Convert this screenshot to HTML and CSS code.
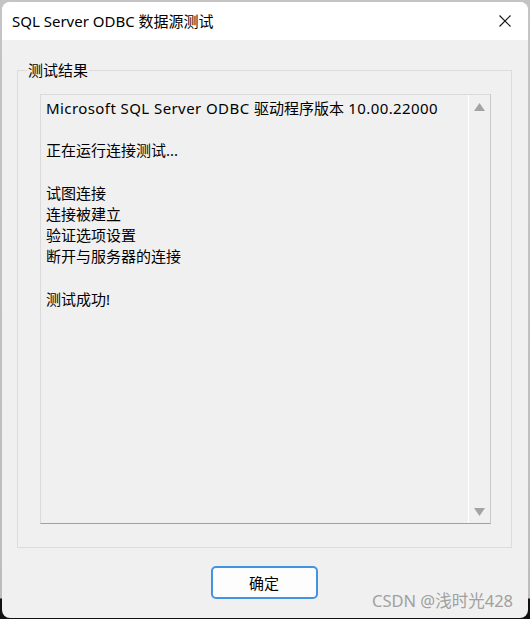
FILE: index.html
```html
<!DOCTYPE html>
<html lang="zh-CN">
<head>
<meta charset="utf-8">
<title>SQL Server ODBC 数据源测试</title>
<link rel="stylesheet" href="styles.css">
</head>
<body>
<div class="window">
  <div class="titlebar">
    <span class="title">SQL Server ODBC 数据源测试</span>
    <svg class="close" width="12" height="12" viewBox="0 0 12 12"><path d="M0.5 0.5 L11.5 11.5 M11.5 0.5 L0.5 11.5" stroke="#1a1a1a" stroke-width="1.2" fill="none"/></svg>
  </div>
  <div class="client">
    <fieldset class="group">
      <legend class="group-label">测试结果</legend>
      <div class="textbox">
        <div class="lines">
          <div class="line"><span class="lat">Microsoft SQL Server ODBC </span>驱动程序版本<span class="lat"> 10.00.22000</span></div>
          <div class="line"></div>
          <div class="line">正在运行连接测试...</div>
          <div class="line"></div>
          <div class="line">试图连接</div>
          <div class="line">连接被建立</div>
          <div class="line">验证选项设置</div>
          <div class="line">断开与服务器的连接</div>
          <div class="line"></div>
          <div class="line">测试成功!</div>
        </div>
        <div class="scrollbar">
          <svg width="11" height="8" viewBox="0 0 11 8"><path d="M5.5 0 L11 8 L0 8 Z" fill="#a3a3a3"/></svg>
          <svg width="11" height="8" viewBox="0 0 11 8"><path d="M0 0 L11 0 L5.5 8 Z" fill="#a3a3a3"/></svg>
        </div>
      </div>
    </fieldset>
    <div class="buttons">
      <button class="btn">确定</button>
    </div>
  </div>
</div>
<div class="watermark">CSDN @浅时光428</div>
</body>
</html>
```
FILE: styles.css
```css
html, body {
  margin: 0;
  padding: 0;
}
body {
  width: 530px;
  height: 619px;
  overflow: hidden;
  background: linear-gradient(to bottom, #c4c4c4 0, #bdbdbd 598px, #111 599px);
  font-family: "Noto Sans", "Noto Sans CJK SC", sans-serif;
  position: relative;
}
.window {
  position: absolute;
  left: 2px;
  top: 2px;
  width: 526px;
  height: 616px;
  border-radius: 8px;
  overflow: hidden;
  background: #f0f0f0;
  display: flex;
  flex-direction: column;
}
.titlebar {
  height: 38px;
  background: #ffffff;
  display: flex;
  align-items: center;
  justify-content: space-between;
  padding: 0 17px 0 10px;
  flex: none;
}
.title {
  font-size: 15px;
  color: #000;
  position: relative;
  top: -1px;
}
.close {
  display: block;
}
.client {
  flex: 1;
  display: flex;
  flex-direction: column;
  padding: 0 16px 0 15px;
}
.group {
  margin: 22px 0 0 0;
  padding: 16px 20px 23px 22px;
  border: 1px solid #dcdcdc;
  min-width: 0;
}
.group-label {
  font-size: 15px;
  color: #000;
  padding: 0 1px;
  margin-left: -13px;
  line-height: 16px;
}
.textbox {
  height: 430px;
  box-sizing: border-box;
  display: flex;
  border-top: 1px solid #dadada;
  border-left: 1px solid #dadada;
  border-right: 1px solid #c8c8c8;
  border-bottom: 1px solid #a0a0a0;
}
.lines {
  flex: 1;
  padding: 3px 0 0 5px;
  font-size: 15px;
  line-height: 21.2px;
  color: #000;
}
.line {
  height: 21.2px;
  white-space: nowrap;
}
.lat {
  letter-spacing: 0.42px;
}
.scrollbar {
  width: 21px;
  border-left: 1px solid #ffffff;
  display: flex;
  flex-direction: column;
  justify-content: space-between;
  align-items: center;
  padding: 8px 0 7px 0;
}
.scrollbar svg {
  display: block;
}
.buttons {
  display: flex;
  justify-content: center;
  padding-top: 18px;
}
.btn {
  width: 107px;
  height: 33px;
  box-sizing: border-box;
  border: 2px solid #4593e0;
  border-radius: 5px;
  background: #fdfdfd;
  font-family: "Noto Sans CJK SC", sans-serif;
  font-size: 15px;
  color: #000;
  padding: 0;
  margin-left: -1px;
}
.watermark {
  position: absolute;
  left: 372px;
  top: 588px;
  font-family: "Noto Sans", "Noto Sans CJK SC", sans-serif;
  font-size: 16.5px;
  color: #a0a0a0;
  white-space: nowrap;
}
```
